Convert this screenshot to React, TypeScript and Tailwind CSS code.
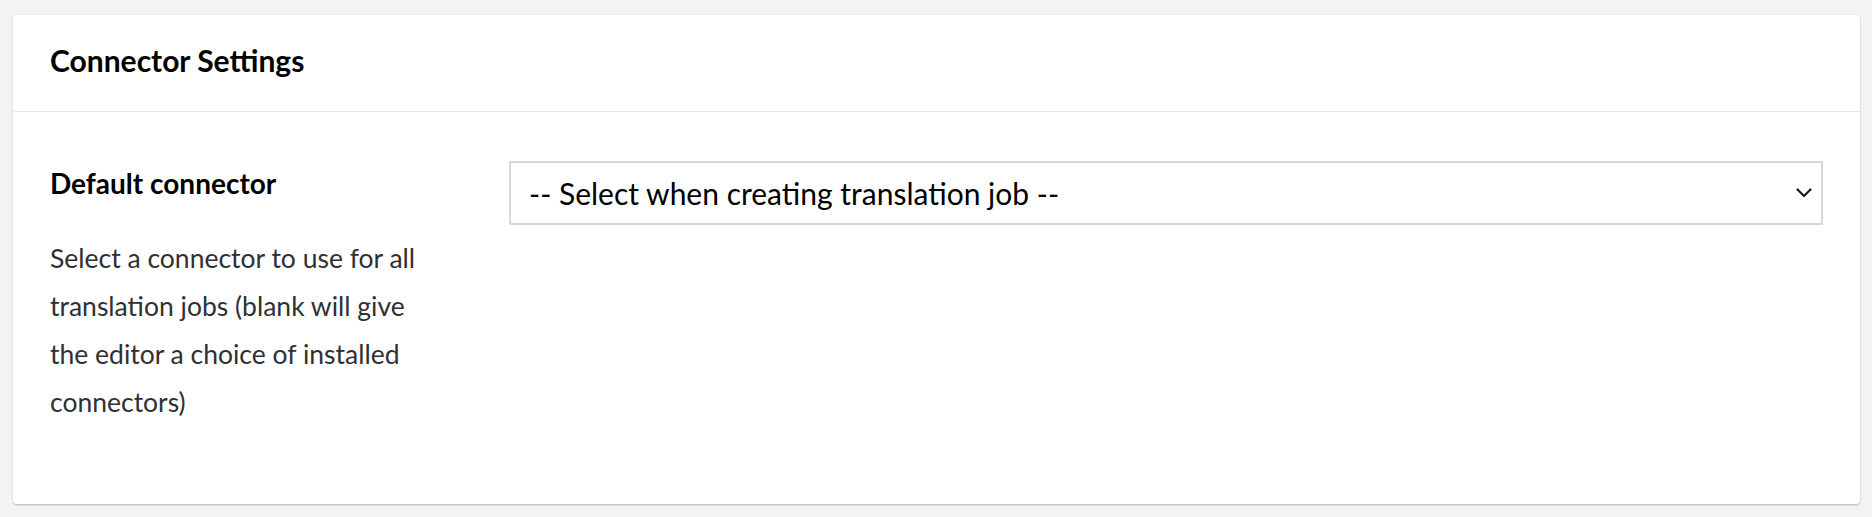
export default function App() {
  return (
    <div className="min-h-screen bg-[#f3f3f5] pl-[13px] pt-[15px] pr-[12px] pb-[12px] font-['Lato','Liberation_Sans',sans-serif]">
      <div className="bg-white rounded-[4px] shadow-[0_1px_2px_rgba(0,0,0,0.25)]">
        <div className="h-[97px] px-[37px] pt-[27px] border-b border-[#e9e9eb]">
          <h2 className="text-[30px] leading-[36px] font-bold text-black">Connector Settings</h2>
        </div>
        <div className="grid grid-cols-[459px_1fr] px-[37px] pt-[49px] pb-[78px]">
          <div className="max-w-[385px] pt-[5px]">
            <div className="text-[28px] font-bold text-black leading-[34px]">Default connector</div>
            <p className="mt-[34px] text-[26.5px] leading-[48px] text-[#303033]">
              Select a connector to use for all translation jobs (blank will give the editor a choice of installed connectors)
            </p>
          </div>
          <div>
            <div className="h-[64px] border-2 border-[#d8d7d9] flex items-center justify-between pl-[18px] pr-[9px] text-black">
              <span className="text-[30px]">-- Select when creating translation job --</span>
              <svg width="16" height="10" viewBox="0 0 16 10" fill="none" stroke="#1b1b1b" strokeWidth="2.2" strokeLinecap="round" strokeLinejoin="round">
                <path d="M1.5 1.5l6.5 6.5 6.5-6.5" />
              </svg>
            </div>
          </div>
        </div>
      </div>
    </div>
  );
}
